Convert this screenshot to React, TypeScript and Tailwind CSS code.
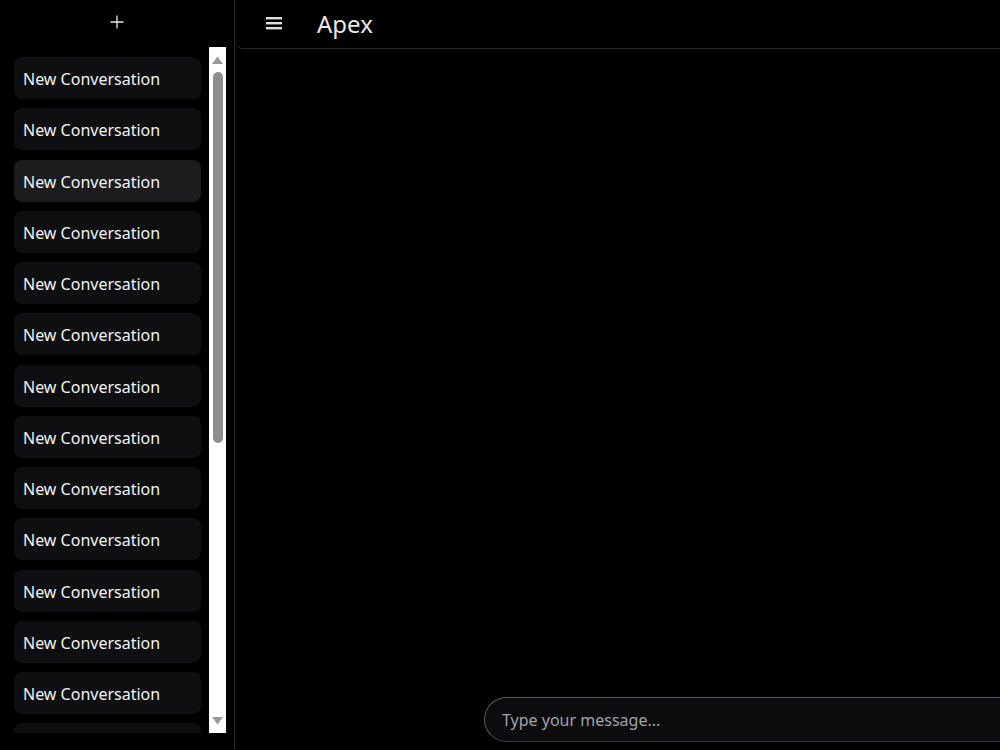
import React from "react";

const items = Array.from({ length: 16 }, (_, i) => i);

export default function App() {
  return (
    <div
      className="flex h-[750px] w-[1000px] overflow-hidden bg-black text-white"
      style={{ fontFamily: '"Noto Sans", "Open Sans", sans-serif' }}
    >
      {/* Sidebar */}
      <aside className="flex h-full w-[235px] shrink-0 flex-col border-r border-[#262626]">
        <div className="flex h-[47px] shrink-0 items-center justify-center">
          <svg width="14" height="14" viewBox="0 0 14 14" className="mt-[-4px]">
            <path d="M7 0.5V13.5M0.5 7H13.5" stroke="#e5e5e5" strokeWidth="1.3" />
          </svg>
        </div>
        <div className="ml-[6px] flex h-[686px] w-[220px] shrink-0">
          <div className="flex h-full flex-1 flex-col gap-[9.25px] overflow-hidden px-[8px] pt-[10px]">
            {items.map((i) => (
              <div
                key={i}
                className={`flex h-[42px] shrink-0 items-center rounded-lg px-[9px] pt-[2px] text-[16px] text-[#f2f2f2] ${
                  i === 2 ? "bg-[#1c1c1f]" : "bg-[#0f0f11]"
                }`}
              >
                New Conversation
              </div>
            ))}
          </div>
          {/* scrollbar */}
          <div className="flex h-full w-[17px] shrink-0 flex-col items-center bg-white">
            <svg width="11" height="8" viewBox="0 0 11 8" className="mt-[9px] shrink-0">
              <path d="M5.5 0.5L11 8H0Z" fill="#9a9a9a" />
            </svg>
            <div className="mt-[8px] h-[371px] w-[10px] shrink-0 rounded-full bg-[#8f8f8f]" />
            <div className="flex-1" />
            <svg width="11" height="8" viewBox="0 0 11 8" className="mb-[8px] shrink-0">
              <path d="M5.5 7.5L11 0H0Z" fill="#9a9a9a" />
            </svg>
          </div>
        </div>
      </aside>

      {/* Main */}
      <main className="flex h-full min-w-0 flex-1 flex-col">
        <header className="flex h-[49px] shrink-0 items-center rounded-bl-lg border-b border-[#2a2a2a] pl-[31px]">
          <svg width="16" height="14" viewBox="0 0 16 14" className="mt-[-2px]">
            <rect x="0" y="1" width="16" height="2.4" fill="#e0e0e0" />
            <rect x="0" y="6" width="16" height="2.4" fill="#e0e0e0" />
            <rect x="0" y="11" width="16" height="2.4" fill="#e0e0e0" />
          </svg>
          <span className="ml-[35px] text-[24px] leading-none text-[#e8e8e8]">Apex</span>
        </header>
        <div className="flex-1" />
        <div className="flex shrink-0 pb-[8px] pl-[249px]">
          <div className="flex h-[45px] w-[700px] shrink-0 items-center rounded-full border border-[#5c5c5c] border-b-[#3a3a3a] bg-[#0c0c0e] pl-[17px] text-[16px] text-[#a0a4ab]">
            Type your message...
          </div>
        </div>
      </main>
    </div>
  );
}
